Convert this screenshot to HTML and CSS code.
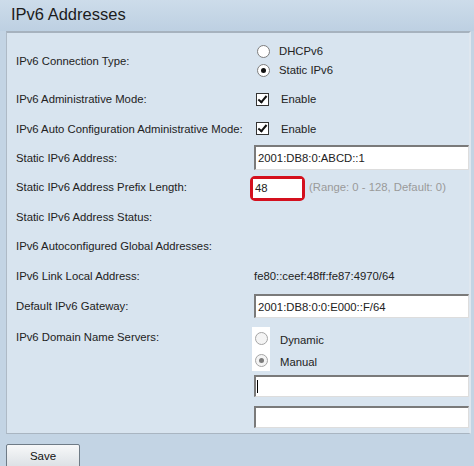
FILE: index.html
```html
<!DOCTYPE html>
<html lang="en">
  <head>
    <meta charset="UTF-8" />
    <meta name="viewport" content="width=device-width,initial-scale=1.0" />
    <title>IPv6 Addresses</title>
    <link rel="stylesheet" href="styles.css">
  </head>
  <body>
    <div class="header">
      <h1>IPv6 Addresses</h1>
    </div>
    <div class="panel">
      <div class="row row-conn">
        <div class="label">IPv6 Connection Type:</div>
        <div class="field stack">
          <div class="opt"><span class="radio"></span><span class="opt-text">DHCPv6</span></div>
          <div class="opt"><span class="radio checked"></span><span class="opt-text">Static IPv6</span></div>
        </div>
      </div>
      <div class="row h30">
        <div class="label">IPv6 Administrative Mode:</div>
        <div class="field"><span class="check"></span><span class="check-text">Enable</span></div>
      </div>
      <div class="row h29">
        <div class="label">IPv6 Auto Configuration Administrative Mode:</div>
        <div class="field"><span class="check"></span><span class="check-text">Enable</span></div>
      </div>
      <div class="row h29">
        <div class="label">Static IPv6 Address:</div>
        <div class="field"><input class="text tall" type="text" value="2001:DB8:0:ABCD::1" /></div>
      </div>
      <div class="row h30">
        <div class="label">Static IPv6 Address Prefix Length:</div>
        <div class="field">
          <span class="highlight"><input class="text short" type="text" value="48" /></span>
          <span class="hint">(Range: 0 - 128, Default: 0)</span>
        </div>
      </div>
      <div class="row h29">
        <div class="label">Static IPv6 Address Status:</div>
        <div class="field"></div>
      </div>
      <div class="row h29">
        <div class="label">IPv6 Autoconfigured Global Addresses:</div>
        <div class="field"></div>
      </div>
      <div class="row h31">
        <div class="label">IPv6 Link Local Address:</div>
        <div class="field value">fe80::ceef:48ff:fe87:4970/64</div>
      </div>
      <div class="row h30">
        <div class="label">Default IPv6 Gateway:</div>
        <div class="field"><input class="text" type="text" value="2001:DB8:0:0:E000::F/64" /></div>
      </div>
      <div class="row row-dns">
        <div class="label">IPv6 Domain Name Servers:</div>
        <div class="field stack">
          <div class="opt dns"><span class="radio-box"><span class="radio soft"></span></span><span class="opt-text">Dynamic</span></div>
          <div class="opt dns"><span class="radio-box"><span class="radio soft checked"></span></span><span class="opt-text">Manual</span></div>
          <span class="caret-wrap"><input class="text dns-1" type="text" value="" /></span>
          <input class="text dns-2" type="text" value="" />
        </div>
      </div>
    </div>
    <div class="footer">
      <button class="save">Save</button>
    </div>
  </body>
</html>
```

FILE: styles.css
```css
body {
  margin: 0;
  background: #c3d4e4;
  font-family: "Liberation Sans", Arial, sans-serif;
  font-size: 11.3px;
  color: #222;
  width: 474px;
  height: 466px;
  overflow: hidden;
}
.header {
  height: 31px;
  background: linear-gradient(#cddcea, #bdd0e2);
  box-sizing: border-box;
  padding: 4px 0 0 11px;
}
h1 {
  margin: 0;
  font-size: 16.5px;
  font-weight: normal;
  color: #1c1c1c;
  line-height: 20px;
}
.panel {
  margin-left: 6px;
  width: 465px;
  background: #d8e4ef;
  border-top: 2px solid #a6b2be;
  border-left: 1px solid #aebac6;
  border-right: 2px solid #dfe7ef;
  border-bottom: 1px solid #a9b5c1;
  padding: 8px 0 0 9px;
  box-sizing: border-box;
}
.row {
  display: flex;
  align-items: center;
}
.label {
  width: 238px;
  flex-shrink: 0;
  white-space: nowrap;
}
.field {
  display: flex;
  align-items: center;
  white-space: nowrap;
}
.stack {
  flex-direction: column;
  align-items: flex-start;
}
.h29 {
  height: 29px;
}
.h30 {
  height: 30px;
}
.h31 {
  height: 31px;
}
.row-conn {
  height: 39px;
  margin-bottom: 4px;
}
.opt {
  display: flex;
  align-items: center;
  height: 19px;
}
.radio {
  width: 11px;
  height: 11px;
  border: 1px solid #7d7d7d;
  border-radius: 50%;
  background: #fff;
  margin-left: 3px;
  position: relative;
  box-sizing: content-box;
}
.radio.checked::after {
  content: "";
  position: absolute;
  left: 3px;
  top: 3px;
  width: 5px;
  height: 5px;
  border-radius: 50%;
  background: #111;
}
.opt-text {
  margin-left: 9px;
}
.check {
  width: 11px;
  height: 11px;
  border: 1px solid #333;
  background: #fff;
  margin-left: 2px;
  position: relative;
}
.check::after {
  content: "";
  position: absolute;
  left: 3px;
  top: 0px;
  width: 3px;
  height: 7px;
  border-right: 2px solid #111;
  border-bottom: 2px solid #111;
  transform: rotate(40deg);
}
.check-text {
  margin-left: 12px;
}
.text {
  width: 215px;
  height: 24px;
  box-sizing: border-box;
  border: 1px solid #ddd;
  border-top: 2px solid #7a7a7a;
  border-left: 2px solid #7a7a7a;
  background: #fff;
  font-family: "Liberation Sans", Arial, sans-serif;
  font-size: 11.3px;
  color: #222;
  padding: 0 2px;
  margin: 0;
  outline: none;
}
.tall {
  height: 25px;
}
.highlight {
  display: inline-flex;
  border: 3px solid #d4101e;
  border-radius: 5px;
  margin-left: -4px;
  margin-top: 2px;
}
.text.short {
  width: 49px;
  height: 19px;
  border: none;
  padding: 0 2px;
}
.hint {
  color: #9a9a9a;
  margin-left: 4px;
}
.value {
  color: #222;
}
.row-dns {
  align-items: flex-start;
  height: 112px;
}
.row-dns .label {
  margin-top: 10px;
}
.row-dns .stack {
  margin-top: 6px;
}
.opt.dns {
  height: 22px;
}
.radio-box {
  width: 18px;
  height: 22px;
  background: #fff;
  margin-left: -2px;
  display: flex;
  align-items: center;
  justify-content: center;
}
.radio.soft {
  margin-left: 0;
  border-color: #a5a5a5;
  background: #f4f4f4;
}
.radio.soft.checked::after {
  background: #7b7b7b;
}
.opt.dns .opt-text {
  margin-left: 10px;
  margin-top: 3px;
}
.caret-wrap {
  position: relative;
  display: block;
  margin-top: 4px;
}
.caret-wrap::after {
  content: "";
  position: absolute;
  left: 3px;
  top: 5px;
  width: 1px;
  height: 13px;
  background: #000;
}
.dns-1 {
  display: block;
  height: 22px;
}
.dns-2 {
  margin-top: 9px;
  height: 22px;
}
.footer {
  padding: 10px 0 0 6px;
}
.save {
  width: 74px;
  height: 26px;
  border: 1px solid #6f7b86;
  border-radius: 2px;
  background: linear-gradient(#f7f8f9, #d9dee3);
  font-family: "Liberation Sans", Arial, sans-serif;
  font-size: 11.5px;
  color: #111;
  padding: 0 0 2px 0;
}
```
